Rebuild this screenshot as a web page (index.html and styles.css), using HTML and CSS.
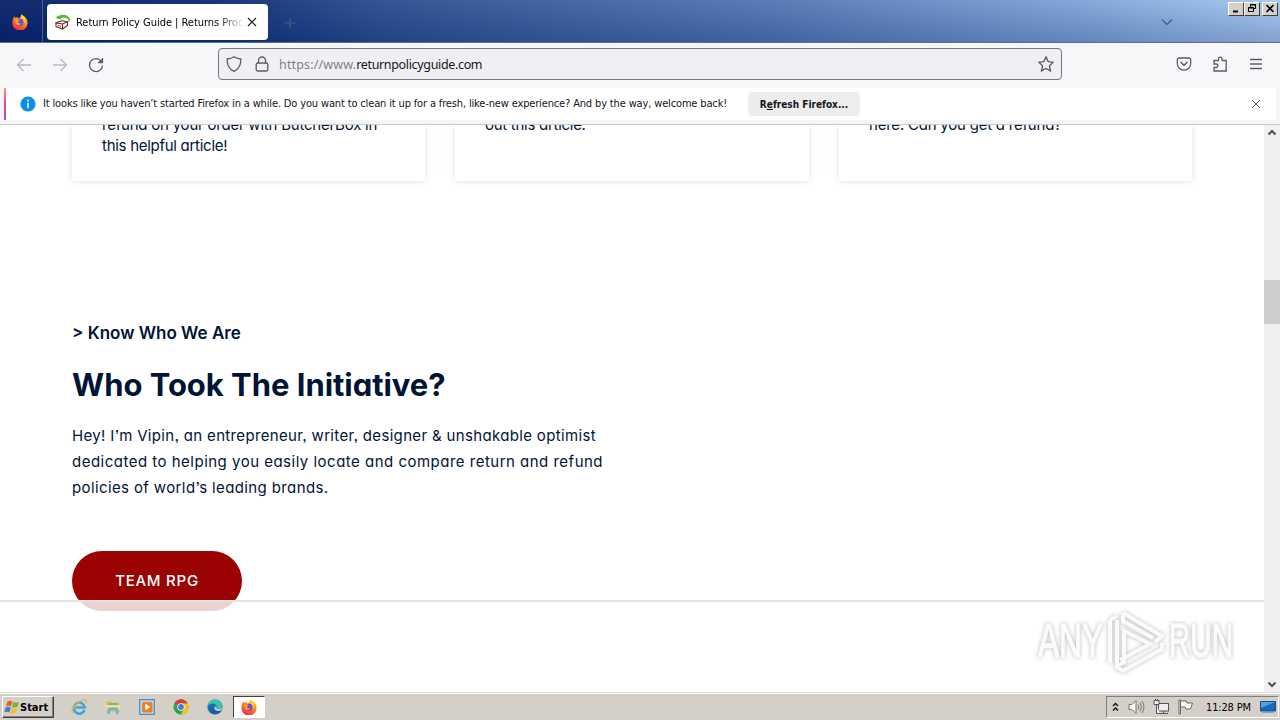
FILE: index.html
```html
<!DOCTYPE html>
<html lang="en">
<head>
<meta charset="utf-8">
<title>Return Policy Guide</title>
<link rel="stylesheet" href="styles.css">
</head>
<body>
<svg width="0" height="0" class="defs">
  <defs>
    <linearGradient id="fox" x1=".8" y1="0" x2=".3" y2="1"><stop offset="0" stop-color="#ffe226"/><stop offset=".45" stop-color="#ff8a16"/><stop offset="1" stop-color="#ee2450"/></linearGradient>
    <linearGradient id="edge" x1="0" y1="0" x2="1" y2="1"><stop offset="0" stop-color="#1682c9"/><stop offset="1" stop-color="#0b4d9c"/></linearGradient>
    <symbol id="firefox" viewBox="0 0 16 16">
      <path d="M1.2 4.2 2.4 2.4l1 1.4L5.5 3 6 4.5l2.2-1L9.6.3l1.5 2.3.7-.6c2.8 2 4.1 4.700 3.700 7.700A7.500 7.500 0 0 1 .5 8.500c0-1.600.1-3 .7-4.300Z" fill="url(#fox)"/>
      <circle cx="8" cy="8.300" r="3.600" fill="#7542e5"/>
      <path d="M3.500 5.500c1.500-.5 3.100 0 4.200.8L6 7.800c.4 1.800 2 2.200 3.400 1.400-.5 2.300-4.500 2.600-5.600 0Z" fill="#ff9f1c"/>
      <path d="M9.600.3c4.200 3 4.500 7.700 2 9.700 1-3-.3-5.100-2.700-6.600Z" fill="#ffd52b"/>
    </symbol>
  </defs>
</svg>

<header class="titlebar">
  <div class="pinned"><svg class="i16"><use href="#firefox"/></svg></div>
  <div class="tab">
    <svg class="i16" viewBox="0 0 16 16" fill="none">
      <path d="M2.500 2.500C7-.5 13.500.5 15.200 5.500c-.2 1.300-.7 2-1.200 2.500.2-3.500-4-5-8.200-3.800l.8 1.300L1.300 4.500 2 .8Z" fill="#59bd3e"/>
      <path d="m1 8.800 5.500-2 6 1L7.500 10Zm0 0v3.700L7.500 15v-5m0 5 5-3.500V7.800" stroke="#6b2926" stroke-width="1.100"/>
      <path d="m3 11.300 3 1.200" stroke="#d23b35"/>
    </svg>
    <span class="tab-title">Return Policy Guide | Returns Process</span>
    <svg class="tab-close" viewBox="0 0 10 10"><path d="m1 1 8 8M9 1 1 9" stroke="#222" stroke-width="1.200"/></svg>
  </div>
  <svg class="newtab" viewBox="0 0 12 12"><path d="M6 .5v11M.5 6h11" stroke="#4c5f7d" stroke-width="1.200"/></svg>
  <svg class="alltabs" viewBox="0 0 12 8" fill="none"><path d="m1 1.500 5 5 5-5" stroke="#45618f" stroke-width="1.500"/></svg>
  <div class="winbtns">
    <span><svg viewBox="0 0 10 9"><path d="M2 7.500h5" stroke="#000" stroke-width="2"/></svg></span>
    <span><svg viewBox="0 0 10 9" fill="none" stroke="#000"><path d="M3.500 3V.5h5v4H7M3 1h6M1.500 3.500h5v4h-5zM1 4h6"/></svg></span>
    <span class="win-close"><svg viewBox="0 0 10 9"><path d="m1.500 1 7 7m0-7-7 7" stroke="#000" stroke-width="1.600"/></svg></span>
  </div>
</header>

<nav class="toolbar">
  <svg class="nav-icon faded" viewBox="0 0 16 16"><path d="M15 8H1.500M7.500 2l-6 6 6 6"/></svg>
  <svg class="nav-icon faded" viewBox="0 0 16 16"><path d="M1 8h13.500M8.500 2l6 6-6 6"/></svg>
  <svg class="nav-icon" viewBox="0 0 16 16"><path d="M13.300 4.300A6.500 6.500 0 1 0 14.500 8.500M14.500 1v4.500H10"/><path d="m14.500 1.500v4h-4z" fill="#5b5b66" stroke="none"/></svg>
  <div class="urlbar">
    <svg class="i16" viewBox="0 0 16 16"><path d="M8 .8c2 1.500 4.300 2 6.800 2.200C15 8.500 13.500 13 8 15.300 2.500 13 1 8.500 1.200 3 3.700 2.800 6 2.300 8 .8Z"/></svg>
    <svg class="i16 lock" viewBox="0 0 16 16"><rect x="2.200" y="7" width="11.600" height="8" rx="1.500"/><path d="M4.500 7V4.500a3.500 3.500 0 0 1 7 0V7"/></svg>
    <span class="url"><span class="scheme">https://www.</span><span class="host">returnpolicyguide.com</span></span>
    <svg class="i16 star" viewBox="0 0 16 16"><path d="m8 .9 2.200 4.700 5 .6-3.700 3.500 1 5.200L8 12.400l-4.500 2.500 1-5.200L.8 6.200l5-.6Z"/></svg>
  </div>
  <div class="tools">
    <svg class="i16" viewBox="0 0 16 16"><path d="M3 2h10a1.700 1.700 0 0 1 1.700 1.700V7.500a6.700 6.700 0 0 1-13.400 0V3.700A1.700 1.700 0 0 1 3 2Z"/><path d="m4.500 6 3.500 3.300L11.500 6" stroke-width="1.500"/></svg>
    <svg class="i16" viewBox="0 0 16 16"><path d="M2 15V11.500h2.500a1.800 1.800 0 0 0 0-3.500H2V4.500h4.500V3a1.800 1.800 0 0 1 3.600 0v1.500H14.200V15Z"/></svg>
    <svg class="i16" viewBox="0 0 16 16"><path d="M2 3.500h12M2 8h12M2 12.500h12"/></svg>
  </div>
</nav>

<section class="notice-wrap">
  <div class="notice">
    <svg class="i16 info" viewBox="0 0 16 16"><circle cx="8" cy="8" r="7.600" fill="#0b8ee6"/><path d="M8 3.500v2M8 6.800v5.400" stroke="#fff" stroke-width="1.400"/></svg>
    <span class="notice-text">It looks like you haven’t started Firefox in a while. Do you want to clean it up for a fresh, like-new experience? And by the way, welcome back!</span>
    <span class="refresh"><span class="refresh-text">R<u>e</u>fresh Firefox...</span></span>
    <svg class="dismiss" viewBox="0 0 10 10"><path d="m1 1 8 8M9 1 1 9" stroke="#555"/></svg>
  </div>
</section>

<main class="viewport">
  <div class="page">
    <div class="cards">
      <article class="card"><p><span class="c1">refund on your order with ButcherBox in</span><br><span class="c2">this helpful article!</span></p></article>
      <article class="card"><p><span class="c3">out this article.</span></p></article>
      <article class="card"><p><span class="c4">here. Can you get a refund?</span></p></article>
    </div>
    <section class="about">
      <h4><span>&gt; Know Who We Are</span></h4>
      <h2><span>Who Took The Initiative?</span></h2>
      <p><span class="p1">Hey! I’m Vipin, an entrepreneur, writer, designer &amp; unshakable optimist</span><br><span class="p2">dedicated to helping you easily locate and compare return and refund</span><br><span class="p3">policies of world’s leading brands.</span></p>
      <a class="team"><span>TEAM RPG</span></a>
    </section>
    <div class="sticky"></div>
  </div>
  <div class="scrollbar">
    <svg viewBox="0 0 10 7"><path d="m1.500 5.500 3.500-3.500 3.500 3.500" fill="none" stroke="#505050" stroke-width="2"/></svg>
    <div class="thumb"></div>
    <svg viewBox="0 0 10 7"><path d="m1.500 1.500 3.500 3.500 3.500-3.500" fill="none" stroke="#505050" stroke-width="2"/></svg>
  </div>
  <svg class="watermark" viewBox="0 0 210 76">
    <g class="mark">
      <text x="8" y="54" textLength="65" lengthAdjust="spacingAndGlyphs">ANY</text>
      <text x="139" y="54" textLength="64" lengthAdjust="spacingAndGlyphs">RUN</text>
      <path d="M80 17v43M87 17v46l7-4V28l26 13-30 16M93 10l39 23-7 6M93 10v8l30 17M132 40v6L93 68l-8-5M80 17l7-4" fill="none" stroke-width="4"/>
    </g>
  </svg>
</main>

<footer class="taskbar">
  <div class="start">
    <svg viewBox="0 0 17 16"><path d="M3.500 2.500c2-1.300 3.500-1 5 0L7 7.500c-1.500-1-3-1.200-5-.2Z" fill="#e8632a"/><path d="M9.300 3c1.800 1 3.500 1 5.700-.2l-1.500 5c-2 1-3.700 1.100-5.500.1Z" fill="#7ab23c"/><path d="M1.800 8.300c2-1 3.500-.8 5 .2l-1.500 5c-1.500-1-3-1.200-5-.2Z" fill="#3c82cf"/><path d="M7.600 9c1.800 1 3.500 1 5.500 0l-1.400 4.700c-2 1.200-3.800 1.200-5.600.2Z" fill="#f3bd29"/></svg>
    <span>Start</span>
  </div>
  <div class="launch">
    <svg class="i16" viewBox="0 0 16 16" fill="none"><path d="M13.500 11A5.500 5.500 0 1 1 13.800 8.500H4.500" stroke="#3ba5dd" stroke-width="2.500"/><path d="M1.500 14.500C-1 11 9-1 15 1.200c1 .6.500 2-.3 3" stroke="#e4b23b" stroke-width="1.300"/></svg>
    <svg class="i16" viewBox="0 0 16 16"><path d="M1 2h5l1 1.500h8V13H1Z" fill="#e6c45c"/><path d="M3 4h10v3H3Z" fill="#72bd70"/><path d="M1 6h14v5H1Z" fill="#f5de90"/><path d="M2.500 10q0-1.500 1.500-1.500h8q1.500 0 1.500 1.500v5h-2.500v-3.500H5V15H2.500Z" fill="#6fb2dc"/></svg>
    <svg class="i16" viewBox="0 0 16 16"><path d="M.7.700h14.600v14.600H.7Z" fill="#b9d9ee" stroke="#4b8dc1" stroke-width="1.200"/><rect x="3" y="3" width="10.500" height="10.500" rx="2" fill="#ef7f1a"/><path d="m6.300 4.800 5 3.300-5 3.300Z" fill="#fff"/></svg>
    <svg class="i16" viewBox="0 0 16 16"><circle cx="8" cy="8" r="7.600" fill="#2da44e"/><path d="M8 8 1.400 4.200A7.600 7.600 0 0 1 14.600 4.200L8 4.500Z" fill="#e33b2e"/><path d="M8 4.400h6.700A7.600 7.600 0 0 1 8 15.600L11.200 9Z" fill="#fbc116"/><circle cx="8" cy="8" r="3.700" fill="#fff"/><circle cx="8" cy="8" r="2.900" fill="#3c7bea"/></svg>
    <svg class="i16" viewBox="0 0 16 16"><circle cx="8" cy="8" r="7.600" fill="url(#edge)"/><path d="M.5 7C1.500-1.500 15-2 15.600 7c0 3-4 4-6 2.500C11 7 8 4 5 4.500 3 5 1.500 5.700.5 7Z" fill="#38c3ae"/><path d="M6.200 8c-.6 3.500 3 5.500 7.500 4C11 16 5 15 4.500 10.500 4.500 9 5 8.500 6.200 8Z" fill="#175fa8"/><path d="M9.600 9.500c1.500 1.500 5 .8 6-1.200l-1.200 3c-2.500 1.500-7 .7-7-2.300 0-1 .8-1.800 2-1.600Z" fill="#d4d0c8"/></svg>
    <div class="active"><svg class="i16"><use href="#firefox"/></svg></div>
  </div>
  <div class="tray">
    <svg class="chev" viewBox="0 0 7 10" fill="none"><path d="m1 4 2.500-2.500L6 4M1 8.500 3.500 6 6 8.500" stroke="#111" stroke-width="1.400"/></svg>
    <svg class="t-sound" viewBox="0 0 17 16" fill="#f7f7f7" stroke="#777"><path d="M1 5.500h3l4-4v13l-4-4H1Z"/><path d="M10 5.500q1.500 2.500 0 5M12 3.500q3 4.500 0 9M14 2q4 6 0 12" fill="none"/></svg>
    <svg class="t-net" viewBox="0 0 17 16" fill="#eee" stroke="#555"><rect x="5.500" y="4.500" width="10" height="7.500"/><path d="M7 14.500h8M10.500 12v2"/><path d="M1 1.500h5v4H1ZM3.500 5.500v9H7" /><path d="M2.500 0v2M4.500 0v2"/></svg>
    <svg class="t-flag" viewBox="0 0 17 16" fill="#fafafa" stroke="#666"><path d="M2 1h1.500v14H2ZM3.500 2H9l1 2h5.500l-2 6H9L8 8H3.500Z"/></svg>
    <span class="clock"><span>11:28 PM</span></span>
    <svg class="i16" viewBox="0 0 16 16"><path d="M.5 2.500h15v9.500H.5Z" fill="#1768be" stroke="#194a83"/><path d="M1 3h14L1 9Z" fill="#4ba2e5"/><path d="M2 13.500h12" stroke="#77a5ca"/></svg>
  </div>
</footer>
</body>
</html>
```

FILE: styles.css
```css
* { box-sizing: border-box; }
body {
  margin: 0;
  width: 1280px;
  height: 720px;
  overflow: hidden;
  display: grid;
  grid-template-rows: 43px 45px 37px 567px 28px;
  background: #fff;
  font-family: "DejaVu Sans Condensed", "DejaVu Sans", sans-serif;
  font-size: 11px;
  color: #15141a;
}
svg { display: block; flex: none; }
span { white-space: nowrap; }
.defs { position: absolute; }
.i16 { width: 16px; height: 16px; }

.titlebar {
  display: flex;
  align-items: flex-start;
  background: linear-gradient(180deg, rgba(255,255,255,.04), rgba(0,20,90,.22)), linear-gradient(90deg, #0a246a 0%, #0c2a72 15%, #2c4f90 30%, #5377b4 60%, #80a6d8 85%, #a6caf0 100%);
  border-bottom: 1px solid #5a6f9b;
}
.pinned {
  width: 43px;
  height: 42px;
  padding: 14px 0 0 12px;
  border-right: 1px solid #4b6095;
}
.tab {
  display: flex;
  align-items: center;
  width: 221px;
  height: 36px;
  margin: 4px 0 0 4px;
  padding: 0 11px 0 8px;
  background: #fff;
  border-radius: 4px;
}
.tab-title {
  width: 169px;
  margin-left: 5px;
  padding-top: 1px;
  overflow: hidden;
  color: #000;
  letter-spacing: -.03px;
  -webkit-mask-image: linear-gradient(90deg, #000 84%, transparent 100%);
  mask-image: linear-gradient(90deg, #000 84%, transparent 100%);
}
.tab-close { width: 10px; height: 10px; margin-left: 2px; }
.newtab { width: 12px; height: 12px; margin: 17px 0 0 16px; }
.alltabs { width: 12px; height: 8px; margin: 18px 55px 0 auto; }
.winbtns { display: flex; padding: 2px 2px 0 0; }
.winbtns span {
  width: 16px;
  height: 14px;
  padding: 1px 2px;
  background: #d4d0c8;
  border: 1px solid;
  border-color: #fff #404040 #404040 #fff;
}
.winbtns svg { width: 10px; height: 9px; }
.winbtns .win-close { margin-left: 2px; }

.toolbar { display: flex; align-items: flex-start; padding: 5px 16px 0; background: #f7f7fa; }
.nav-icon, .urlbar svg, .tools svg { fill: none; stroke: #5b5b66; stroke-width: 1.3; }
.nav-icon { width: 16px; height: 16px; margin: 9px 20px 0 0; }
.nav-icon.faded { stroke: #b9b9c0; }
.urlbar {
  display: flex;
  align-items: center;
  width: 844px;
  height: 32px;
  margin-left: 94px;
  padding: 0 7px;
  background: #f0f0f4;
  border: 1px solid #75757f;
  border-radius: 4px;
}
.urlbar .lock { margin-left: 12px; }
.url { display: flex; margin-left: 9px; font-size: 12.5px; font-family: "Noto Sans", sans-serif; }
.scheme { color: #80808a; letter-spacing: .15px; }
.host { color: #15141a; letter-spacing: -.34px; }
.star { margin-left: auto; }
.tools { display: flex; gap: 20px; margin: 8px 0 0 auto; }

.notice-wrap { padding: 0 4px 0; background: #f5f5f6; border-bottom: 1px solid #c9c9ce; }
.notice {
  display: flex;
  align-items: center;
  height: 32px;
  padding: 0 15px 0 14px;
  background: #fff;
  border-radius: 0 4px 4px 0;
  border-left: 2px solid;
  border-image: linear-gradient(#ff9a66, #e8439d 50%, #9059d8) 1;
}
.notice-text { width: 684px; margin-left: 7px; padding-bottom: 2px; letter-spacing: -.148px; }
.refresh {
  display: flex;
  align-items: center;
  justify-content: center;
  width: 112px;
  height: 24px;
  margin-left: 21px;
  background: #ededee;
  border-radius: 4px;
  font-weight: bold;
  font-size: 10px;
}
.dismiss { width: 10px; height: 10px; margin-left: auto; }

.viewport { position: relative; display: grid; grid-template-columns: 1264px 16px; overflow: hidden; }
.page { position: relative; overflow: hidden; font-family: Inter, sans-serif; font-feature-settings: "cv11", "ss03"; color: #001433; }
.cards { display: grid; grid-template-columns: 353px 354px 353px; gap: 30px; height: 56px; padding-left: 72px; }
.card { padding: 0 30px; box-shadow: 0 0 8px rgba(0,0,0,.12); }
.card p { margin: -11px 0 0; font-size: 15px; line-height: 21px; }
.c1, .c4 { letter-spacing: -.22px; }
.c2, .c3 { letter-spacing: -.28px; }
.about { padding: 140px 0 0 72px; }
.about h4 { margin: 0; font-size: 17px; line-height: 24px; font-weight: 600; }
.about h2 { margin: 19px 0 0; font-size: 31px; line-height: 42px; font-weight: 700; letter-spacing: -.04px; }
.about p { margin: 17px 0 0; font-size: 15px; line-height: 26px; }
.p1 { letter-spacing: .34px; }
.p2 { letter-spacing: .49px; }
.p3 { letter-spacing: .38px; }
.team {
  display: flex;
  align-items: center;
  justify-content: center;
  width: 170px;
  height: 60px;
  margin-top: 50px;
  padding-bottom: 2px;
  border-radius: 30px;
  background: #9b0202;
  color: #fff;
  font-size: 15px;
  font-weight: 500;
  letter-spacing: .75px;
}
.sticky {
  position: absolute;
  left: 0;
  right: 0;
  top: 475px;
  bottom: 0;
  background: rgba(255,255,255,.82);
  border-top: 2px solid #e3e3e3;
}
.scrollbar { display: flex; flex-direction: column; align-items: center; background: #f0f0f0; padding: 4px 0; }
.scrollbar svg { width: 10px; height: 7px; }
.thumb { width: 16px; height: 44px; margin: 144px 0 auto; background: #cdcdcd; }
.watermark { position: absolute; left: 1030px; top: 478px; width: 210px; height: 76px; }
.mark { fill: #fcfcfc; stroke: #fafafa; filter: drop-shadow(0 0 2px rgba(0,0,0,.28)); }
.mark text { font: 48px "Liberation Sans", sans-serif; stroke-width: 1.5; }

.taskbar {
  display: flex;
  align-items: center;
  padding: 2px 1px 0 2px;
  background: #d4d0c8;
  box-shadow: inset 0 1px #dedbd5, inset 0 2px #fff;
}
.start {
  display: flex;
  align-items: center;
  width: 52px;
  height: 22px;
  padding-left: 1px;
  border: 1px solid;
  border-color: #fff #404040 #404040 #fff;
  box-shadow: inset -1px -1px #808080;
  font-weight: bold;
  font-size: 11px;
  color: #000;
}
.start svg { width: 17px; height: 16px; margin-right: -1px; }
.launch { display: flex; align-items: center; gap: 18px; margin-left: 17px; }
.launch .active {
  display: flex;
  align-items: center;
  justify-content: center;
  width: 32px;
  height: 22px;
  margin-left: -8px;
  background: #fff;
  border: 1px solid;
  border-color: #404040 #fff #fff #404040;
}
.tray {
  display: flex;
  align-items: center;
  width: 173px;
  height: 22px;
  margin-left: auto;
  padding: 0 2px 0 5px;
  border: 1px solid;
  border-color: #808080 #fff #fff #808080;
  color: #000;
}
.chev { width: 7px; height: 10px; }
.t-sound { width: 17px; height: 16px; margin-left: 9px; }
.t-net { width: 17px; height: 16px; margin-left: 8px; }
.t-flag { width: 17px; height: 16px; margin-left: 7px; }
.clock { margin: 0 auto 0 12px; letter-spacing: -.15px; }
```
